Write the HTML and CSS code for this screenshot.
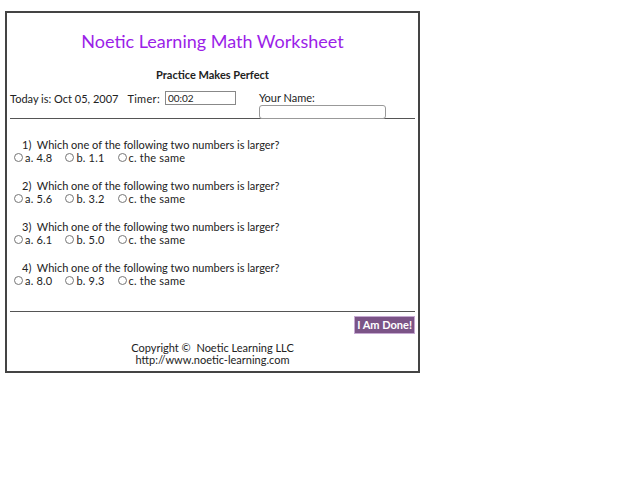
FILE: index.html
```html
<!DOCTYPE html>
<html lang="en">
<head>
	<meta charset="UTF-8">
	<title>Noetic Learning Math Worksheet</title>
	<link rel="stylesheet" href="styles.css">
</head>
<body>
	<div class="sheet">
		<div class="title">Noetic Learning Math Worksheet</div>
		<div class="subtitle">Practice Makes Perfect</div>
		<div class="info">
			<div class="info-left">
				<span>Today is: Oct 05, 2007</span>
				<span class="timer-label">Timer:</span>
				<input class="timer" type="text" value="00:02">
			</div>
			<div class="info-name">
				<div>Your Name:</div>
				<input class="name" type="text">
			</div>
		</div>
		<div class="rule"></div>
		<div class="questions">
			<div class="question">
				<div class="q-text">1)&nbsp; Which one of the following two numbers is larger?</div>
				<div class="options">
					<label><input type="radio" name="q1">a. 4.8</label>
					<label><input type="radio" name="q1">b. 1.1</label>
					<label><input type="radio" name="q1">c. the same</label>
				</div>
			</div>
			<div class="question">
				<div class="q-text">2)&nbsp; Which one of the following two numbers is larger?</div>
				<div class="options">
					<label><input type="radio" name="q2">a. 5.6</label>
					<label><input type="radio" name="q2">b. 3.2</label>
					<label><input type="radio" name="q2">c. the same</label>
				</div>
			</div>
			<div class="question">
				<div class="q-text">3)&nbsp; Which one of the following two numbers is larger?</div>
				<div class="options">
					<label><input type="radio" name="q3">a. 6.1</label>
					<label><input type="radio" name="q3">b. 5.0</label>
					<label><input type="radio" name="q3">c. the same</label>
				</div>
			</div>
			<div class="question">
				<div class="q-text">4)&nbsp; Which one of the following two numbers is larger?</div>
				<div class="options">
					<label><input type="radio" name="q4">a. 8.0</label>
					<label><input type="radio" name="q4">b. 9.3</label>
					<label><input type="radio" name="q4">c. the same</label>
				</div>
			</div>
		</div>
		<div class="rule bottom-rule"></div>
		<div class="actions">
			<div class="done">I Am Done!</div>
		</div>
		<div class="footer">
			<div>Copyright &copy;&nbsp; Noetic Learning LLC</div>
			<div>http://www.noetic-learning.com</div>
		</div>
	</div>
</body>
</html>
```

FILE: styles.css
```css
body {
	margin: 0;
	background-color: #fff;
	font-family: Lato, "DejaVu Sans", sans-serif;
	font-size: 11px;
	color: #222;
}

.sheet {
	width: 405px;
	height: 358px;
	margin: 11px 0 0 5px;
	border: 2px solid #444;
	padding: 0 3px;
	box-sizing: content-box;
}

.title {
	margin-top: 17px;
	text-align: center;
	font-size: 18px;
	color: #9b1ee8;
	line-height: 22px;
}

.subtitle {
	margin-top: 16px;
	text-align: center;
	font-weight: bold;
	line-height: 14px;
}

.info {
	display: flex;
	margin-top: 6px;
}

.info-left {
	display: flex;
	align-items: center;
	height: 16px;
	margin-top: 2px;
}

.timer-label {
	margin-left: 9px;
	margin-right: 5px;
	letter-spacing: 0.3px;
}

.timer {
	width: 71px;
	height: 14px;
	box-sizing: border-box;
	border: 1px solid #888;
	padding: 0 2px;
	font-family: Lato, sans-serif;
	font-size: 10px;
	color: #222;
}

.info-name {
	margin-left: 23px;
	margin-top: 3px;
	line-height: 13px;
}

.name {
	display: block;
	width: 127px;
	height: 14px;
	box-sizing: border-box;
	border: 1px solid #999;
	border-radius: 3px;
	margin-top: 1px;
}

.rule {
	height: 1px;
	background-color: #555;
	margin-top: -1px;
}

.questions {
	padding-top: 19px;
	height: 173px;
}

.question {
	margin-bottom: 15px;
}

.q-text {
	padding-left: 12px;
	line-height: 13px;
}

.options {
	display: flex;
	line-height: 13px;
}

.options label {
	display: flex;
	align-items: center;
	margin-right: 9px;
	letter-spacing: 0.2px;
}

.options input {
	width: 9px;
	height: 9px;
	margin: 0 2px 0 4px;
}

.bottom-rule {
	margin-top: 0;
}

.actions {
	display: flex;
	justify-content: flex-end;
	margin-top: 4px;
}

.done {
	background-color: #7b5487;
	color: #fff;
	font-weight: bold;
	padding: 2px 2px;
	border: 1px solid #c6a9d2;
	line-height: 12px;
}

.footer {
	margin-top: 8px;
	text-align: center;
	line-height: 12px;
}
```
